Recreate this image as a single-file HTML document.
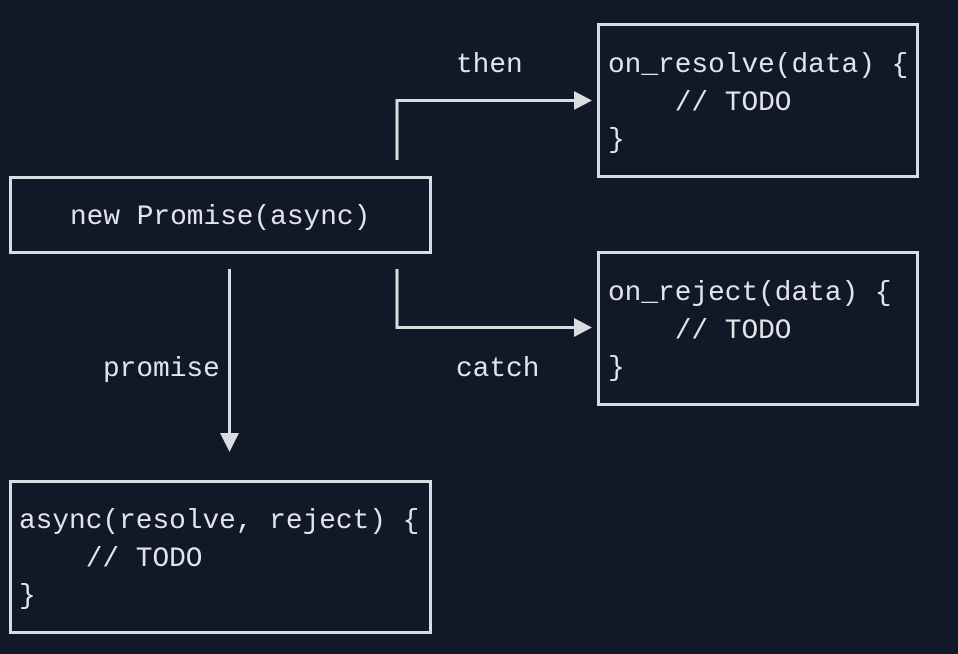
<!DOCTYPE html>
<html><head><style>
html,body{margin:0;padding:0;background:#111827;}
svg{display:block}
text{font-family:"Liberation Mono",monospace;font-size:27.8px;fill:#e2e4e9;white-space:pre}
</style></head><body>
<svg width="958" height="654" viewBox="0 0 958 654" xmlns="http://www.w3.org/2000/svg">
<rect width="958" height="654" fill="#111827"/>
<g fill="none" stroke="#d9dce1" stroke-width="3">
<rect x="598.5" y="24.5" width="319" height="152"/>
<rect x="598.5" y="252.5" width="319" height="152"/>
<rect x="10.5" y="177.5" width="420" height="75"/>
<rect x="10.5" y="481.5" width="420" height="151"/>
<path d="M397 160 V100.5 H578"/>
<path d="M397 269 V327.5 H578"/>
<path d="M229.5 269 V434"/>
</g>
<g fill="#d9dce1">
<polygon points="574,91 592,100.5 574,110"/>
<polygon points="574,318 592,327.5 574,337"/>
<polygon points="220,433 239,433 229.5,452"/>
</g>
<text x="456" y="72">then</text>
<text x="456" y="376">catch</text>
<text x="103" y="376">promise</text>
<text x="70" y="224">new Promise(async)</text>
<text x="608" y="72">on_resolve(data) {</text>
<text x="608" y="110">    // TODO</text>
<text x="608" y="147">}</text>
<text x="608" y="300">on_reject(data) {</text>
<text x="608" y="338">    // TODO</text>
<text x="608" y="375">}</text>
<text x="19" y="528">async(resolve, reject) {</text>
<text x="19" y="566">    // TODO</text>
<text x="19" y="603">}</text>
</svg>
</body></html>
